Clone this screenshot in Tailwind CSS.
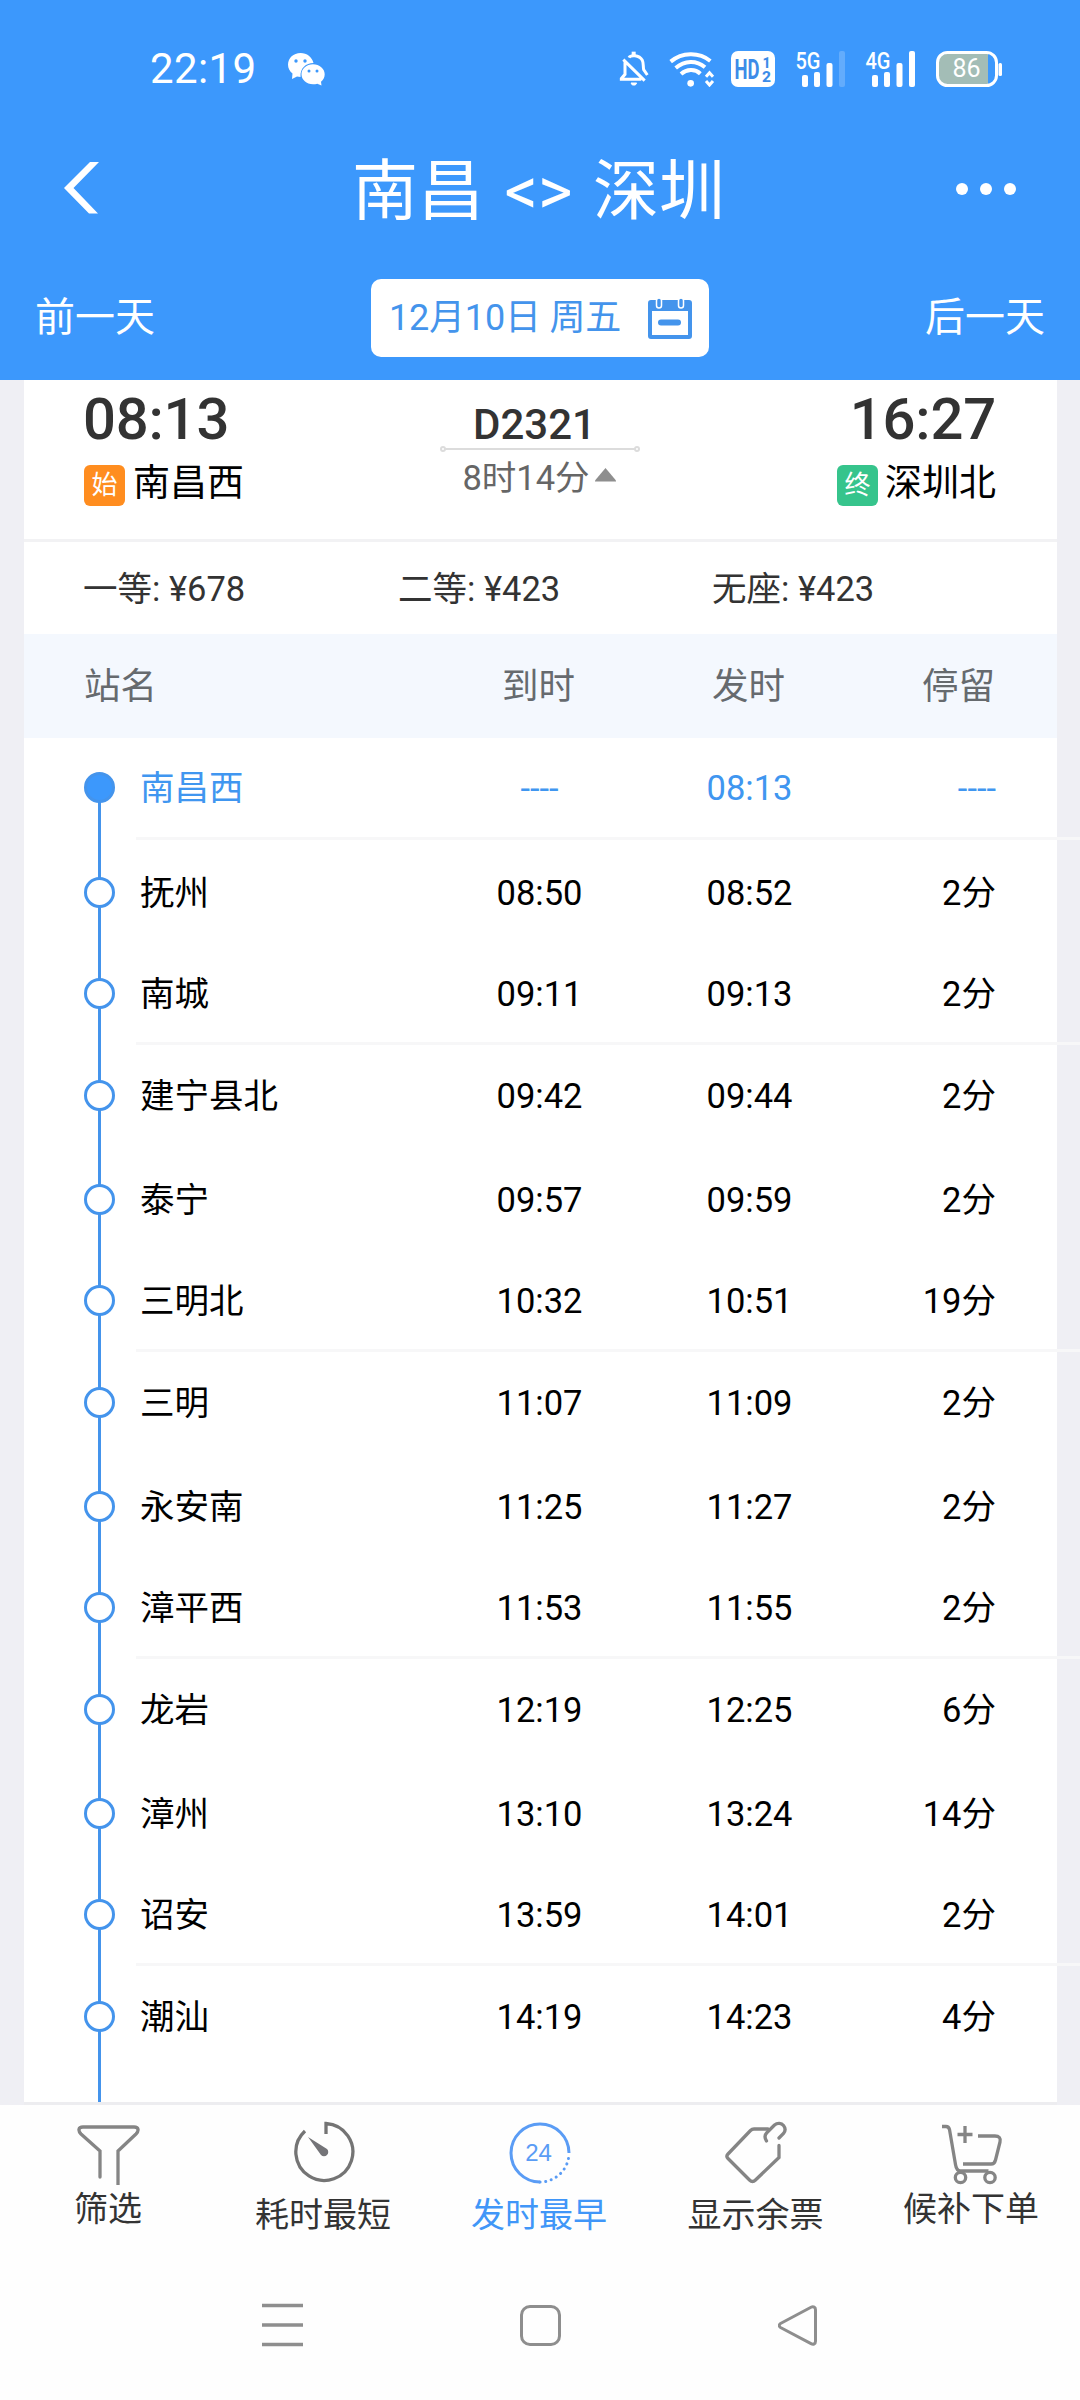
<!DOCTYPE html>
<html lang="zh-CN">
<head>
<meta charset="utf-8">
<title>南昌 - 深圳</title>
<script src="https://cdn.jsdelivr.net/npm/@tailwindcss/browser@4"></script>
</head>
<body class="w-[1080px] h-[2400px] overflow-hidden bg-[#efeff4] font-[Roboto,'Noto_Sans_CJK_SC',sans-serif] flex flex-col whitespace-nowrap">

<header class="h-[380px] shrink-0 bg-[#3c98fc] text-white flex flex-col">
  <!-- status bar -->
  <div class="h-[137px] flex items-center pl-[150px] pr-[77px]">
    <span class="text-[42px] leading-[42px] w-[137px] tracking-[0.4px]">22:19</span>
    <svg class="w-[38px] h-[34px]" viewBox="0 0 38 34">
      <path fill="#fff" d="M13.5 1C6.500 1 1 6 1 12.500c0 3.800 1.700 6.800 4.500 9L5 27l5-2.500c1.200.3 2.400.5 3.500.5C13 16 19 11 26.500 11 25 5 20 1 13.500 1z"/>
      <path fill="#fff" d="M26 12.300c-6.500 0-11.500 4.500-11.500 10s5 10 11.500 10c1.500 0 3-.2 4.300-.6L34.500 33.500l-.5-3.700c2.300-1.900 3.700-4.500 3.700-7.500 0-5.500-5.200-10-11.700-10z"/>
      <g fill="#3c98fc"><circle cx="9" cy="9" r="1.700"/><circle cx="18" cy="9" r="1.700"/><circle cx="22" cy="19" r="1.500"/><circle cx="30" cy="19" r="1.500"/></g>
    </svg>
    <div class="ml-auto flex items-center">
      <svg class="w-[30px] h-[37px]" viewBox="54 61 90 111" fill="none" stroke="#fff" stroke-width="9">
        <path d="M84 84c4-8 30-10 40 8 4 8 2 18 4 28l11 16"/>
        <path d="M98 66v10" stroke-width="12"/>
        <path d="M67 90l64 63M72 98v36l-11 13v2h60"/>
        <path d="M90 160h17l-4 6h-9z" fill="#fff" stroke-width="3"/>
      </svg>
      <svg class="ml-[20px] w-[46px] h-[36px]" viewBox="207 60 138 108" fill="none" stroke="#fff" stroke-width="12">
        <path d="M212 92c34-28 84-30 119-2"/>
        <path d="M227 111c27-23 62-24 88-2"/>
        <path d="M243 129c17-15 42-16 58-1"/>
        <circle cx="272" cy="157" r="10" fill="#fff" stroke="none"/>
        <path d="M318 137l10.500-12 10.500 12M318 150l10.500 12 10.500-12" stroke-width="9"/>
      </svg>
      <svg class="ml-[16px] w-[44px] h-[36px]" viewBox="0 0 44 36" fill="#3c8ce8"><rect width="44" height="36" rx="7" fill="#fff"/><text x="3.500" y="28" font-size="27" font-weight="700" textLength="25" lengthAdjust="spacingAndGlyphs">HD</text><text x="31.500" y="16.500" font-size="14" font-weight="800">1</text><text x="31" y="31" font-size="14" font-weight="800" textLength="9" lengthAdjust="spacingAndGlyphs">2</text></svg>
      <svg class="ml-[20px] w-[52px] h-[36px] overflow-visible" viewBox="0 0 52 36" fill="#fff">
        <text x="0.500" y="18" font-size="24" font-weight="500" textLength="25" lengthAdjust="spacingAndGlyphs">5G</text>
        <rect x="7" y="24" width="6" height="12" rx="2"/><rect x="19" y="21" width="6" height="15" rx="2"/><rect x="31.500" y="12" width="6" height="24" rx="2"/><rect x="44" y="0" width="6" height="36" rx="2" opacity=".2"/>
      </svg>
      <svg class="ml-[18px] w-[52px] h-[36px] overflow-visible" viewBox="0 0 52 36" fill="#fff">
        <text x="0.500" y="18" font-size="24" font-weight="500" textLength="25" lengthAdjust="spacingAndGlyphs">4G</text>
        <rect x="7" y="24" width="6" height="12" rx="2"/><rect x="19" y="21" width="6" height="15" rx="2"/><rect x="31.500" y="12" width="6" height="24" rx="2"/><rect x="44" y="0" width="6" height="36" rx="2"/>
      </svg>
      <svg class="ml-[19px] w-[67px] h-[36px]" viewBox="0 0 67 36">
        <path d="M10 3h42v30H10a7 7 0 0 1-7-7V10a7 7 0 0 1 7-7z" fill="#a3bdb6"/>
        <rect x="1.500" y="1.500" width="59" height="33" rx="10" fill="none" stroke="#fff" stroke-width="3"/>
        <rect x="62.500" y="12" width="3.500" height="13" rx="1.500" fill="#fff"/>
        <text x="30.500" y="26" font-size="25" font-weight="400" text-anchor="middle" fill="#fff">86</text>
      </svg>
    </div>
  </div>
  <!-- title bar -->
  <div class="h-[105px] flex items-center justify-between pl-[64px] pr-[64px]">
    <svg class="w-[36px] h-[52px] mb-[4px]" viewBox="0 0 36 52"><path fill="#fff" d="M26 0h9L9.500 26 34 51.500h-9L0 26z"/></svg>
    <h1 class="text-[66px] leading-[80px] font-normal pl-[21px] pt-[5px]">南昌<span class="px-[4px]"> &lt;&gt; </span>深圳</h1>
    <svg class="w-[60px] h-[14px] mb-[2px]" viewBox="0 0 60 14" fill="#fff"><circle cx="6" cy="7" r="6"/><circle cx="30" cy="7" r="6"/><circle cx="54" cy="7" r="6"/></svg>
  </div>
  <!-- date bar -->
  <div class="h-[138px] pt-[37px] flex items-start justify-between pl-[35px] pr-[35px]">
    <span class="text-[40px] leading-[77px]">前一天</span>
    <div class="w-[338px] h-[78px] rounded-[10px] bg-white text-[#4494ec] flex items-center pl-[18px]">
      <span class="text-[36px] leading-[76px] w-[259px] tracking-[-0.2px]">12月10日 周五</span>
      <svg class="w-[44px] h-[42px]" viewBox="0 0 44 42">
        <path fill="#4494ec" fill-rule="evenodd" d="M3 3h38a3 3 0 0 1 3 3v33a3 3 0 0 1-3 3H3a3 3 0 0 1-3-3V6a3 3 0 0 1 3-3zM4 14v24h36V14z"/>
        <rect x="8.500" y="1" width="5" height="10" rx="2.500" fill="#4494ec" stroke="#fff" stroke-width="1.500"/><rect x="30.500" y="1" width="5" height="10" rx="2.500" fill="#4494ec" stroke="#fff" stroke-width="1.500"/>
        <rect x="10" y="22.500" width="23" height="6" rx="3" fill="#4494ec"/>
      </svg>
    </div>
    <span class="text-[40px] leading-[77px]">后一天</span>
  </div>
</header>

<main class="h-[1725px] shrink-0 ml-[24px] w-[1033px] bg-white border-b-[3px] border-[#ededf0]">
  <!-- train summary -->
  <section class="h-[159px] flex justify-between pl-[60px] pr-[61px] pt-[8px] text-black">
    <div class="w-[250px]">
      <div class="text-[58px] leading-[60px] font-medium text-[#333] mt-[1px] ml-[-1px] tracking-[-0.2px]">08:13</div>
      <div class="flex items-center mt-[10px] h-[50px] gap-[8px]"><span class="mt-[3px] size-[41px] rounded-[6px] bg-[#ff8d1f] text-white text-[26px] leading-[40px] text-center">始</span><span class="text-[37px] leading-[50px]">南昌西</span></div>
    </div>
    <div class="w-[202px] flex flex-col items-center">
      <div class="text-[42px] leading-[48px] font-medium text-[#333] mt-[13px] pr-[11px]">D2321</div>
      <svg class="w-[202px] h-[8px] -mt-[5px]" viewBox="0 0 202 8" fill="none" stroke="#dcdcdc" stroke-width="2"><path d="M6 5h190"/><circle cx="4" cy="5" r="2"/><circle cx="198" cy="5" r="2"/></svg>
      <div class="flex items-center gap-[5px] text-[34.500px] leading-[50px] text-[#666] mt-[1px] pr-[2px]">8时14分<svg class="w-[21px] h-[14px] mb-[6px]" viewBox="0 0 21 14"><path fill="#8e8e8e" d="M10.500 0L21 12.500v1H0v-1z"/></svg></div>
    </div>
    <div class="w-[250px] flex flex-col items-end">
      <div class="text-[58px] leading-[60px] font-medium text-[#333] mt-[1px] tracking-[-0.2px]">16:27</div>
      <div class="flex items-center mt-[10px] h-[50px] gap-[7px]"><span class="mt-[3px] size-[41px] rounded-[6px] bg-[#36c48c] text-white text-[26px] leading-[40px] text-center">终</span><span class="text-[37px] leading-[50px]">深圳北</span></div>
    </div>
  </section>
  <!-- fares -->
  <section class="h-[95px] border-t-[3px] border-[#f2f2f4] pl-[59px] pt-[1px] grid grid-cols-[315px_314px_1fr] items-center text-[34.500px] leading-[50px] text-[#333]">
    <span>一等: ¥678</span><span>二等: ¥423</span><span>无座: ¥423</span>
  </section>
  <!-- stops table -->
  <div class="h-[104px] bg-[#f4f8fe] pl-[60px] pr-[62px] pt-[2px] grid grid-cols-[349.5px_210px_210px_1fr] items-center text-[36.500px] leading-[50px] text-[#666a6e]">
    <span>站名</span><span class="text-center">到时</span><span class="text-center">发时</span><span class="text-right">停留</span>
  </div>
  <div id="stops" class="h-[1364px] relative"></div>
</main>

<footer class="grow bg-[#fefefe]">
  <nav class="grid grid-cols-5 h-[160px] pt-[16px] text-[34px] leading-[44px] text-[#333]">
    <div class="flex flex-col items-center">
      <svg class="w-[64px] h-[64px]" viewBox="76 2121 64 64" fill="none" stroke="#858585" stroke-width="3.300"><path stroke-linecap="round" d="M100 2177v-26l-19-17c-3-3-3-7 2-7h51c5 0 5 4 2 7l-18 17v34"/></svg>
      <span class="mt-[2px]">筛选</span>
    </div>
    <div class="flex flex-col items-center">
      <svg class="w-[64px] h-[64px]" viewBox="292 2121 64 64" fill="none" stroke="#747474" stroke-width="3.300"><path d="M326 2134v-10.500a28.500 28.500 0 1 1-21 7.500"/><path d="M308 2137l19 12a4 4 0 1 1-6 6z" fill="#747478" stroke="none"/></svg>
      <span class="mt-[8px] pr-[2px]">耗时最短</span>
    </div>
    <div class="flex flex-col items-center text-[#4096f8]">
      <svg class="w-[64px] h-[64px]" viewBox="508 2121 64 64" fill="none" stroke="#5a9cf5" stroke-width="3"><path d="M569 2153a29 29 0 1 0-29 29"/><path d="M540 2182a29 29 0 0 0 29-29" stroke-linecap="round" stroke-dasharray="0.100 5.600"/><text x="538.500" y="2161" font-size="24" fill="#5a9cf5" stroke="none" text-anchor="middle" font-family="Liberation Sans">24</text></svg>
      <span class="mt-[8px] pr-[2px]">发时最早</span>
    </div>
    <div class="flex flex-col items-center">
      <svg class="w-[64px] h-[64px]" viewBox="724 2121 64 64" fill="none" stroke="#858585" stroke-width="3.300"><path stroke-linecap="round" d="M768 2129h-14c-1.500 0-2.500.5-3.500 1.500L728 2154c-1.500 1.500-1.500 3 0 4.500l21.500 21.500c2 2 4 2 6 0l23.500-22.500v-12"/><path stroke-linecap="round" d="M766.500 2141c-2-3-2-6 .5-8.500l7.500-7.500c3-2.500 7-2 9 .5 2 2.500 2 5.500 0 8l-4.500 4.500"/></svg>
      <span class="mt-[8px] pr-[1px]">显示余票</span>
    </div>
    <div class="flex flex-col items-center">
      <svg class="w-[64px] h-[64px]" viewBox="940 2121 64 64" fill="none" stroke="#858585" stroke-width="3.300"><path d="M942 2126.500h4c2 0 3 1 3.500 3l6 35c.6 4 2 6.500 5 6.500h28"/><path d="M978 2136h17c4 0 6 2 5 6l-4.500 18c-.6 2.500-2 4-4.500 4h-28M965 2126v17M957.500 2134.500h15"/><circle cx="960.500" cy="2177.500" r="5.200"/><circle cx="990" cy="2177.500" r="5.200"/></svg>
      <span class="mt-[2px] pr-[2px]">候补下单</span>
    </div>
  </nav>
  <div class="flex justify-center items-center gap-[217px] h-[120px]">
    <svg class="w-[41px] h-[44px]" viewBox="0 0 41 44" stroke="#8e8e8e" stroke-width="3.500"><path d="M0 2.500h41M0 22h41M0 41.500h41"/></svg>
    <div class="size-[41px] border-[3px] border-[#8e8e8e] rounded-[10px]"></div>
    <svg class="w-[41px] h-[44px]" viewBox="0 0 41 44" fill="none" stroke="#8e8e8e" stroke-width="3"><path stroke-linejoin="round" d="M2.500 20.500L33 4.300c2.500-1.300 4.500 0 4.500 2.400v31.600c0 2.500-2 3.700-4.500 2.400L2.500 24.500c-1.600-1-1.600-3 0-4z"/></svg>
  </div>
</footer>

<script>
const stops = [
  ['南昌西','----','08:13','----'],['抚州','08:50','08:52','2分'],['南城','09:11','09:13','2分'],
  ['建宁县北','09:42','09:44','2分'],['泰宁','09:57','09:59','2分'],['三明北','10:32','10:51','19分'],
  ['三明','11:07','11:09','2分'],['永安南','11:25','11:27','2分'],['漳平西','11:53','11:55','2分'],
  ['龙岩','12:19','12:25','6分'],['漳州','13:10','13:24','14分'],['诏安','13:59','14:01','2分'],['潮汕','14:19','14:23','4分']
];
let html = '<div class="absolute left-[74px] top-[50px] bottom-0 w-[3px] bg-[#4494ec]"></div>';
stops.forEach(([name, arr, dep, stay], i) => {
  const first = i === 0;
  html += `<div class="${first ? 'h-[99px] text-[#4096f0]' : 'h-[101px] text-black'} relative flex items-center pr-[61px] text-[34.5px] leading-[50px]">
    <span class="ml-[60px] mr-[25px] size-[31px] rounded-full border-[3px] border-[#4494ec] ${first ? 'bg-[#3c98fc]' : 'bg-white'}"></span>
    <div class="grow grid grid-cols-[294.5px_210px_210px_1fr]"><span>${name}</span><span class="text-center">${arr}</span><span class="text-center">${dep}</span><span class="text-right">${stay}</span></div>
  </div>`;
  if (first) html += '<div class="ml-[112px] w-[944px] h-[3px] mb-[2px] bg-[#f7f7f8]"></div>';
  else if (i % 3 === 2) html += '<div class="ml-[112px] w-[944px] h-[3px] -mt-[2px] bg-[#f7f7f8]"></div>';
  else if (i % 3 === 0) html += '<div class="h-[3px]"></div>';
});
document.getElementById('stops').innerHTML = html;
</script>
</body>
</html>
